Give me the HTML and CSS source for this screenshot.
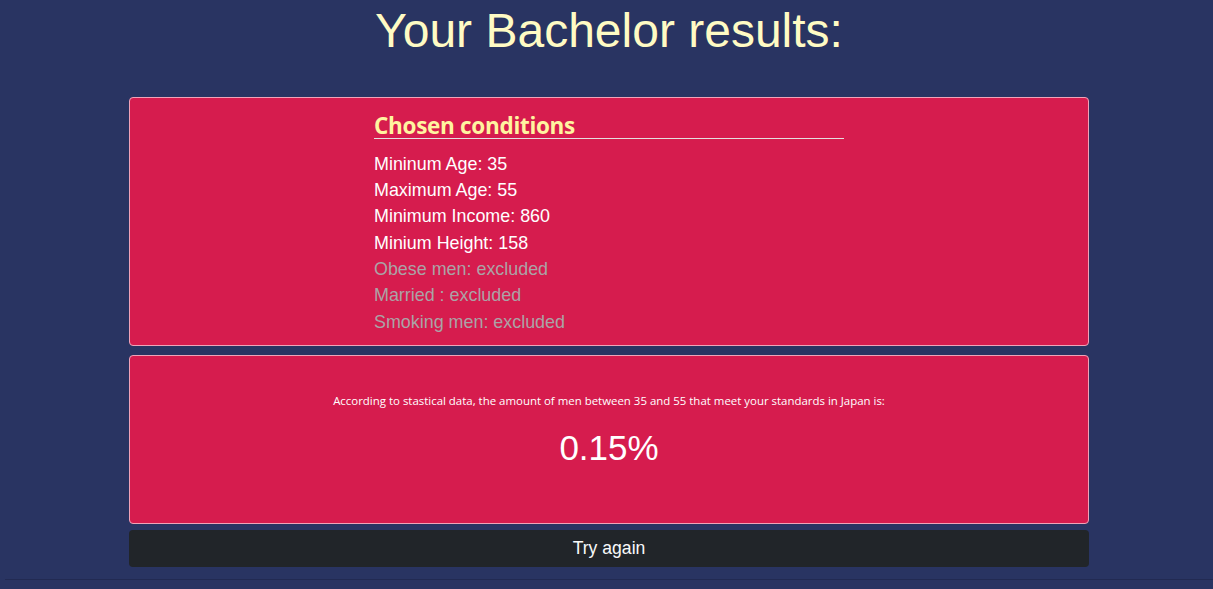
FILE: index.html
```html
<!DOCTYPE html>
<html lang="en">
<head>
<meta charset="utf-8">
<title>Your Bachelor results</title>
<link rel="stylesheet" href="styles.css">
</head>
<body>
<main class="page">
  <h1 class="title">Your Bachelor results:</h1>
  <section class="card conditions">
    <div class="col">
      <h3 class="cond-title">Chosen conditions</h3>
      <ul class="cond-list">
        <li>Mininum Age: 35</li>
        <li>Maximum Age: 55</li>
        <li>Minimum Income: 860</li>
        <li>Minium Height: 158</li>
        <li class="off">Obese men: excluded</li>
        <li class="off">Married : excluded</li>
        <li class="off">Smoking men: excluded</li>
      </ul>
    </div>
  </section>
  <section class="card result">
    <p class="result-text">According to stastical data, the amount of men between 35 and 55 that meet your standards in Japan is:</p>
    <p class="percent">0.15%</p>
  </section>
  <button class="btn-again" type="button">Try again</button>
</main>
<div class="footer-line"></div>
</body>
</html>
```

FILE: styles.css
```css
html, body {
  margin: 0;
  padding: 0;
  background: #293462;
  font-family: "Liberation Sans", Arial, sans-serif;
}

body {
  padding-left: 5px;
}

.page {
  width: 960px;
  margin: 0 auto;
  padding-top: 2px;
  display: flex;
  flex-direction: column;
}

.title {
  margin: 0 0 37px;
  font-size: 48px;
  font-weight: 400;
  line-height: 1.2;
  color: #fffbc4;
  text-align: center;
}

.card {
  background: #d61c4e;
  border: 1px solid #f0a3b8;
  border-radius: 4px;
  box-sizing: border-box;
}

.conditions {
  height: 249px;
  padding: 15px 0 0;
  display: flex;
  justify-content: center;
}

.col {
  width: 470px;
}

.cond-title {
  margin: 0;
  font-family: "Open Sans", "Noto Sans", sans-serif;
  font-size: 22.5px;
  font-weight: 700;
  letter-spacing: -0.3px;
  line-height: 25px;
  color: #fff4a0;
  border-bottom: 1px solid #e4dede;
}

.cond-list {
  list-style: none;
  margin: 12px 0 0;
  padding: 0;
  font-size: 17.9px;
  line-height: 26.33px;
  color: #ffffff;
}

.cond-list .off {
  color: #aba3a6;
}

.result {
  margin-top: 9px;
  height: 169px;
  padding-top: 37px;
  text-align: center;
  color: #ffffff;
}

.result-text {
  margin: 0;
  font-family: "Open Sans", "Noto Sans", sans-serif;
  font-size: 11.45px;
  line-height: 16px;
}

.percent {
  margin: 19px 0 0;
  font-size: 35px;
  line-height: 40px;
}

.btn-again {
  margin-top: 6px;
  height: 37px;
  border: none;
  border-radius: 4px;
  background: #212529;
  color: #f8f9fa;
  font-family: "Liberation Sans", Arial, sans-serif;
  font-size: 17.6px;
  line-height: 37px;
  padding: 0;
  cursor: pointer;
}

.footer-line {
  margin-top: 12px;
  height: 1px;
  background: #222a52;
}
```
